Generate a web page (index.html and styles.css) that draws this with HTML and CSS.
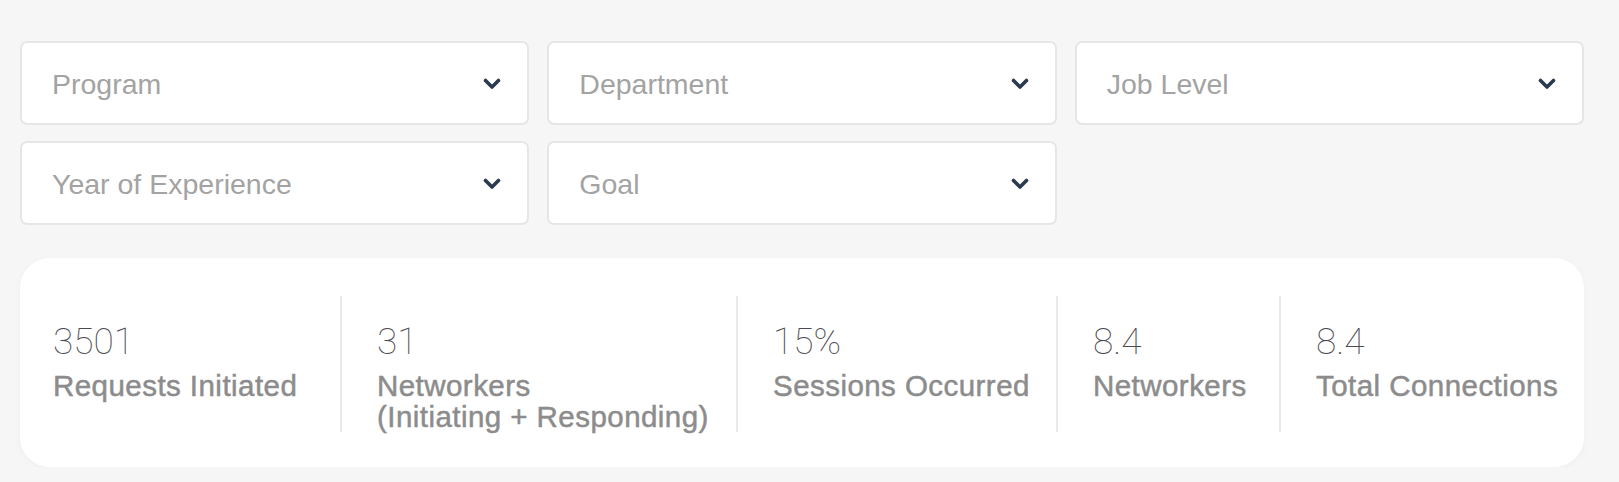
FILE: index.html
```html
<!DOCTYPE html>
<html lang="en">
<head>
    <meta charset="UTF-8">
    <meta name="viewport" content="width=device-width, initial-scale=1.0">
    <title>Networking Dashboard</title>
    <link rel="stylesheet" href="styles.css">
</head>
<body>
    <main class="page">
        <section class="filters">
            <div class="select">
                <span class="select-label">Program</span>
                <svg class="chevron" width="18" height="12" viewBox="0 0 18 12"><polyline points="2.5,2.5 9,9 15.5,2.5"/></svg>
            </div>
            <div class="select">
                <span class="select-label">Department</span>
                <svg class="chevron" width="18" height="12" viewBox="0 0 18 12"><polyline points="2.5,2.5 9,9 15.5,2.5"/></svg>
            </div>
            <div class="select">
                <span class="select-label">Job Level</span>
                <svg class="chevron" width="18" height="12" viewBox="0 0 18 12"><polyline points="2.5,2.5 9,9 15.5,2.5"/></svg>
            </div>
            <div class="select">
                <span class="select-label">Year of Experience</span>
                <svg class="chevron" width="18" height="12" viewBox="0 0 18 12"><polyline points="2.5,2.5 9,9 15.5,2.5"/></svg>
            </div>
            <div class="select">
                <span class="select-label">Goal</span>
                <svg class="chevron" width="18" height="12" viewBox="0 0 18 12"><polyline points="2.5,2.5 9,9 15.5,2.5"/></svg>
            </div>
        </section>

        <section class="stats">
            <div class="stat">
                <p class="stat-value">3501</p>
                <p class="stat-label">Requests Initiated</p>
            </div>
            <div class="stat">
                <p class="stat-value">31</p>
                <p class="stat-label">Networkers<br>(Initiating + Responding)</p>
            </div>
            <div class="stat">
                <p class="stat-value">15%</p>
                <p class="stat-label">Sessions Occurred</p>
            </div>
            <div class="stat">
                <p class="stat-value">8.4</p>
                <p class="stat-label">Networkers</p>
            </div>
            <div class="stat">
                <p class="stat-value">8.4</p>
                <p class="stat-label">Total Connections</p>
            </div>
        </section>
    </main>
</body>
</html>
```

FILE: styles.css
```css
body, p {
    margin: 0;
    padding: 0;
}

body {
    font-family: "Liberation Sans", Arial, sans-serif;
    background-color: #f6f6f6;
}

.page {
    padding: 41px 35px 0 20px;
}

/* dropdown filters */
.filters {
    display: grid;
    grid-template-columns: repeat(3, 1fr);
    gap: 16px 18px;
}

.select {
    display: flex;
    align-items: center;
    justify-content: space-between;
    height: 84px;
    box-sizing: border-box;
    padding: 2px 26px 0 30px;
    background-color: #fff;
    border: 2px solid #e6e6e6;
    border-radius: 7px;
}

.select-label {
    font-size: 28.5px;
    color: #a3a3a3;
}

.chevron polyline {
    fill: none;
    stroke: #2b3a4e;
    stroke-width: 3.6;
    stroke-linecap: round;
    stroke-linejoin: round;
}

/* stats card */
.stats {
    display: grid;
    grid-template-columns: 320px 396px 320px 223px 1fr;
    margin-top: 33px;
    padding: 38px 0 35px;
    background-color: #fff;
    border-radius: 30px;
    box-shadow: 0 2px 8px rgba(0, 0, 0, 0.03);
}

.stat {
    padding: 28px 0 0 35px;
    border-left: 2px solid #e9e9e9;
}

.stat:first-child {
    padding-left: 33px;
    border-left: none;
}

.stat-value {
    font-family: Roboto, "Liberation Sans", sans-serif;
    font-weight: 100;
    font-size: 37px;
    line-height: 36px;
    color: #4a4a52;
}

.stat-label {
    margin-top: 10px;
    font-size: 29.5px;
    line-height: 31px;
    letter-spacing: 0.45px;
    color: #8c8c8c;
    -webkit-text-stroke: 0.5px #8c8c8c;
}
```
